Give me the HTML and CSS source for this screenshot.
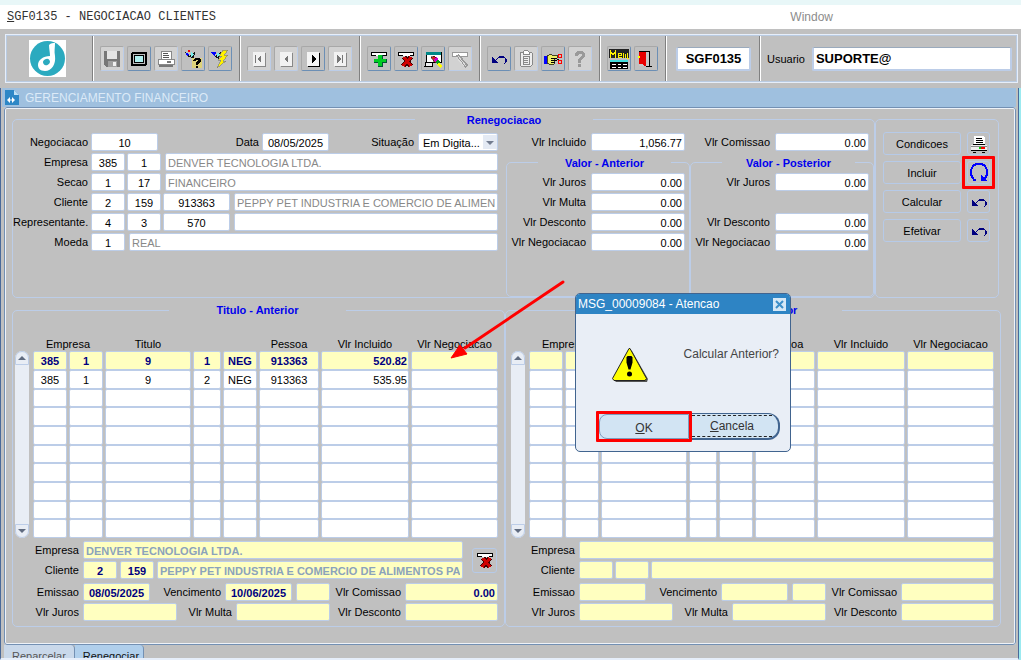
FILE: index.html
```html
<!DOCTYPE html>
<html lang="pt-BR">
<head>
    <meta charset="UTF-8">
    <title>SGF0135 - Negociacao Clientes</title>
    <link rel="stylesheet" href="styles.css">
</head>
<body>
    <!-- shared icons -->
    <svg class="sprite" aria-hidden="true">
        <symbol id="i-undo" viewBox="0 0 20 20">
            <path d="M7 11l3-3h5l2 2v3l-2 2" fill="none" stroke="#000080" stroke-width="1.200"/>
            <path d="M3 8v6h6z" fill="#000080"/>
        </symbol>
        <symbol id="i-remove" viewBox="0 0 20 20">
            <path d="M2 3h16v4H2z" fill="#fff"/>
            <path d="M2 3h16v1H2zM2 3h1v4H2zM17 3h1v4h-1zM2 6h5v1H2zM14 6h4v1h-4z" fill="#000"/>
            <path d="M8 8l7 9M15 8l-8 9" fill="none" stroke="#400" stroke-width="5"/>
            <path d="M8 8l7 9M15 8l-8 9" fill="none" stroke="#d00000" stroke-width="3"/>
        </symbol>
    </svg>

    <div class="top-strip"></div>
    <nav class="menubar">
        <a href="#" class="menu-main"><u>S</u>GF0135 - NEGOCIACAO CLIENTES</a>
        <a href="#" class="menu-window">Window</a>
    </nav>

    <header class="toolbar">
        <div class="tool-group logo">
            <svg width="37" height="37" viewBox="0 0 37 37">
                <rect width="37" height="37" fill="#fff"/>
                <circle cx="18.500" cy="18.500" r="17.500" fill="#2baabf"/>
                <path d="M20 5c2-2 4-2 6-2 0 5-1 8 0 13 1 8-3 15-10 15-5 0-7-3-7-6 0-5 5-9 12-9 0-4-1-7-1-11z" fill="#fff"/>
                <ellipse cx="17.500" cy="22" rx="3.500" ry="3" fill="#2baabf" transform="rotate(-35 17.500 22)"/>
            </svg>
        </div>
        <div class="tool-group">
            <button class="tool off" aria-label="Salvar" disabled>
                <svg viewBox="0 0 20 20"><path d="M2 2h16v16H4l-2-2z" fill="#777"/><path d="M5 2h10v8H5z" fill="#e4e4e4"/><path d="M6 12h9v6H6z" fill="#a0a0a0"/><path d="M11 13h3v4h-3z" fill="#f0f0f0"/></svg>
            </button>
            <button class="tool" aria-label="Tela">
                <svg viewBox="0 0 20 20"><rect x="3" y="4" width="14" height="12" rx="1" fill="#c0c0c0" stroke="#000" stroke-width="2"/><rect x="5.500" y="6.500" width="9" height="7" fill="#b0f0f0" stroke="#000"/></svg>
            </button>
            <button class="tool off" aria-label="Imprimir" disabled>
                <svg viewBox="0 0 20 20"><path d="M5 2h10v8H5z" fill="#fff" stroke="#888"/><path d="M7 4.500h5M7 6.500h6M7 8.500h6" stroke="#555"/><path d="M2 10h16v5H2z" fill="#fff" stroke="#888"/><path d="M3 17h14M11 12.500h4" stroke="#777" stroke-width="2"/></svg>
            </button>
            <button class="tool" aria-label="Entrar consulta">
                <svg viewBox="0 0 20 20"><path d="M2 3l4 4 6-4-1 6-6-1z" fill="#111"/><path d="M3 4l3 1-1 3-2-2z" fill="#00f"/><path d="M8 3l3 3-3 2z" fill="#7ee"/><path d="M5 1h2v2H5z" fill="red"/><path d="M9 9h10v10H9z" fill="#ddd27a"/><path d="M10 11l2-2h4l2 2v2l-3 2v1h-2v-3l2-1v-1h-2v1h-3zM13 17h2v2h-2z" fill="#000"/></svg>
            </button>
            <button class="tool" aria-label="Executar consulta">
                <svg viewBox="0 0 20 20"><path d="M1 3l4 4 6-4-2 7-4-2z" fill="#111"/><path d="M1 3h5l-1 4-2-1z" fill="#00f"/><path d="M7 4l3 1-3 3z" fill="#7ee"/><path d="M13 1h5l-4 5h4l-5 6h3l-9 7 4-8H8l4-4H9z" fill="#fff200" stroke="#777" stroke-width=".6"/></svg>
            </button>
        </div>
        <div class="tool-group">
            <button class="tool off" aria-label="Primeiro" disabled>
                <svg viewBox="0 0 20 20"><path d="M4 3h12v14H4z" fill="#f2f2f2"/><path d="M16 4v13H5" fill="none" stroke="#888"/><path d="M12 6v8l-4-4zM6 6h1v8H6z" fill="#777"/></svg>
            </button>
            <button class="tool off" aria-label="Anterior" disabled>
                <svg viewBox="0 0 20 20"><path d="M4 3h12v14H4z" fill="#f2f2f2"/><path d="M16 4v13H5" fill="none" stroke="#888"/><path d="M12 6v8l-4-4z" fill="#777"/></svg>
            </button>
            <button class="tool" aria-label="Proximo">
                <svg viewBox="0 0 20 20"><path d="M4 3h12v14H4z" fill="#f4f4f4"/><path d="M16 4v13H5" fill="none" stroke="#000"/><path d="M9 6v8l4-4z" fill="#000"/></svg>
            </button>
            <button class="tool off" aria-label="Ultimo" disabled>
                <svg viewBox="0 0 20 20"><path d="M4 3h12v14H4z" fill="#f2f2f2"/><path d="M16 4v13H5" fill="none" stroke="#888"/><path d="M7 6v8l4-4zM12 6h1v8h-1z" fill="#777"/></svg>
            </button>
        </div>
        <div class="tool-group">
            <button class="tool" aria-label="Inserir">
                <svg viewBox="0 0 20 20"><path d="M2 3h16v4H2z" fill="#fff"/><path d="M2 3h16v1H2zM2 3h1v4H2zM17 3h1v4h-1zM2 6h5v1H2zM14 6h4v1h-4z" fill="#000"/><path d="M9 6h5v4h4v4h-4v4H9v-4H5v-4h4z" fill="#053"/><path d="M9 6h4v4h4v3h-4v4H9v-4H5v-3h4z" fill="#0c2"/></svg>
            </button>
            <button class="tool" aria-label="Remover">
                <svg viewBox="0 0 20 20"><use href="#i-remove"/></svg>
            </button>
            <button class="tool" aria-label="Limpar tela">
                <svg viewBox="0 0 20 20"><path d="M3 3h15v10H3z" fill="#fff" stroke="#000"/><path d="M3 3h15v3H3z" fill="#088"/><path d="M3 13h6v4H2z" fill="#eee" stroke="#000"/><path d="M8 8l3-1 4 4-3 3z" fill="#d02020" stroke="#000" stroke-width=".5"/><path d="M10 11l3-3 2 2-3 3z" fill="#c0c"/><path d="M12 13l3-3 2 3-2 2z" fill="#092"/><path d="M14 15l2-2 3 4-2 2z" fill="#ff0"/></svg>
            </button>
            <button class="tool off" aria-label="Limpar registro" disabled>
                <svg viewBox="0 0 20 20"><path d="M2 3h15v4H2z" fill="#fff" stroke="#999"/><path d="M6 6l3-1 9 11-3 3z" fill="#999"/><path d="M8 7l8 10M6 8l8 9" stroke="#ddd"/></svg>
            </button>
        </div>
        <div class="tool-group">
            <button class="tool" aria-label="Desfazer">
                <svg viewBox="0 0 20 20"><use href="#i-undo"/></svg>
            </button>
            <button class="tool off" aria-label="Colar" disabled>
                <svg viewBox="0 0 20 20"><rect x="4" y="3" width="12" height="14" rx="1" fill="#eee" stroke="#888"/><path d="M7 5V3l2-2h2l2 2v2z" fill="#fff" stroke="#888"/><path d="M7 7h6v8H7zM8 9.500h4M8 11.500h4M8 13.500h4" fill="none" stroke="#888"/></svg>
            </button>
            <button class="tool" aria-label="Recortar">
                <svg viewBox="0 0 20 20"><path d="M1 7h3v8H1z" fill="#00f"/><path d="M4 7l3-2 2 1h5v3h-3v6l-3 1-4-2z" fill="#ee6" stroke="#000" stroke-width=".7"/><path d="M8 9.500h5M8 11.500h4M8 13.500h4" stroke="#000"/><path d="M12 9l4 2M12 12l4-2" stroke="#000"/><circle cx="17" cy="7" r="2" fill="none" stroke="red"/><circle cx="17" cy="13" r="2" fill="none" stroke="red"/></svg>
            </button>
            <button class="tool off" aria-label="Ajuda" disabled>
                <svg viewBox="0 0 20 20"><path d="M5 5l2-3h6l2 3v3l-4 3v3H8v-4l4-3V5H9l-1 2H5zM8 15h3v3H8z" fill="#999"/></svg>
            </button>
        </div>
        <div class="tool-group">
            <button class="tool" aria-label="Menu">
                <svg viewBox="0 0 20 20"><path d="M0 0h20v9H0z" fill="#222"/><path d="M1.500 9V2l2.500 4 2.500-4v7M13 6H9v2h4M9 6V4h3v2M14.500 9V4M16.500 5v4M18 4v5h2V4" fill="none" stroke="#fff200"/><path d="M1 11h18v9H1z" fill="#000"/><path d="M1 11h18v2H1z" fill="#4dd"/><path d="M3 15.500h4M9 15.500h3M14 15.500h4M3 18.500h4M9 18.500h3M14 18.500h4" stroke="#fff"/></svg>
            </button>
            <button class="tool" aria-label="Sair">
                <svg viewBox="0 0 20 20"><path d="M3 2h11v15H3z" fill="#c8c8c8"/><path d="M3 2h11v15h2v1h-6v-1h3V3H3z" fill="#000"/><path d="M3 3h7v14H8l-1-2H3z" fill="#e80000"/><path d="M2 7h2v2H2z" fill="#ff0"/></svg>
            </button>
        </div>
        <div class="tool-group code">
            <input type="text" class="field big center" aria-label="Programa" value="SGF0135">
        </div>
        <div class="tool-group user">
            <label for="usuario">Usuario</label>
            <input type="text" class="field big" id="usuario" value="SUPORTE@">
        </div>
    </header>

    <main class="window">
        <div class="window-title">
            <svg width="14" height="15" viewBox="0 0 14 15"><path d="M0 0h9l5 5v10H0z" fill="#2d87c6"/><path d="M9 0v5h5z" fill="#bfe0f5"/><path d="M2 10l3-3v6zM7 7v6l3-3zM5 9.500h2v1H5z" fill="#fff"/></svg>
            <h1>GERENCIAMENTO FINANCEIRO</h1>
        </div>

        <div class="window-body">
            <div class="upper">
                <fieldset class="group reneg">
                    <legend><span>Renegociacao</span></legend>
                    <div class="reneg-cols">
                        <div class="form">
                            <div class="row">
                                <label class="lbl" for="negociacao">Negociacao</label>
                                <input type="text" class="field code-m center" id="negociacao" value="10">
                                <label class="lbl-data" for="data">Data</label>
                                <input type="text" class="field code-m center" id="data" value="08/05/2025">
                                <label class="lbl-sit" for="situacao">Situação</label>
                                <div class="select-box">
                                    <select id="situacao"><option>Em Digita...</option></select>
                                </div>
                            </div>
                            <div class="row">
                                <label class="lbl" for="empresa">Empresa</label>
                                <input type="text" class="field code-s center" id="empresa" value="385">
                                <input type="text" class="field code-s center" aria-label="Filial" value="1">
                                <input type="text" class="field desc" aria-label="Nome da empresa" value="DENVER TECNOLOGIA LTDA.">
                            </div>
                            <div class="row">
                                <label class="lbl" for="secao">Secao</label>
                                <input type="text" class="field code-s center" id="secao" value="1">
                                <input type="text" class="field code-s center" aria-label="Codigo da secao" value="17">
                                <input type="text" class="field desc" aria-label="Nome da secao" value="FINANCEIRO">
                            </div>
                            <div class="row">
                                <label class="lbl" for="cliente">Cliente</label>
                                <input type="text" class="field code-s center" id="cliente" value="2">
                                <input type="text" class="field code-s center" aria-label="Grupo do cliente" value="159">
                                <input type="text" class="field code-m center" aria-label="Codigo do cliente" value="913363">
                                <input type="text" class="field desc" aria-label="Nome do cliente" value="PEPPY PET INDUSTRIA E COMERCIO DE ALIMENTOS PARA">
                            </div>
                            <div class="row">
                                <label class="lbl" for="representante">Representante.</label>
                                <input type="text" class="field code-s center" id="representante" value="4">
                                <input type="text" class="field code-s center" aria-label="Grupo do representante" value="3">
                                <input type="text" class="field code-m center" aria-label="Codigo do representante" value="570">
                                <input type="text" class="field desc" aria-label="Nome do representante">
                            </div>
                            <div class="row">
                                <label class="lbl" for="moeda">Moeda</label>
                                <input type="text" class="field code-s center" id="moeda" value="1">
                                <input type="text" class="field desc" aria-label="Nome da moeda" value="REAL">
                            </div>
                        </div>

                        <div class="values">
                            <div class="row">
                                <label for="incluido">Vlr Incluido</label>
                                <input type="text" class="field num" id="incluido" value="1,056.77">
                            </div>
                            <fieldset class="group">
                                <legend><span>Valor - Anterior</span></legend>
                                <div class="row"><label for="a-juros">Vlr Juros</label><input type="text" class="field num" id="a-juros" value="0.00"></div>
                                <div class="row"><label for="a-multa">Vlr Multa</label><input type="text" class="field num" id="a-multa" value="0.00"></div>
                                <div class="row"><label for="a-desc">Vlr Desconto</label><input type="text" class="field num" id="a-desc" value="0.00"></div>
                                <div class="row"><label for="a-neg">Vlr Negociacao</label><input type="text" class="field num" id="a-neg" value="0.00"></div>
                            </fieldset>
                        </div>

                        <div class="values">
                            <div class="row">
                                <label for="comissao">Vlr Comissao</label>
                                <input type="text" class="field num" id="comissao" value="0.00">
                            </div>
                            <fieldset class="group">
                                <legend><span>Valor - Posterior</span></legend>
                                <div class="row"><label for="p-juros">Vlr Juros</label><input type="text" class="field num" id="p-juros" value="0.00"></div>
                                <div class="row"></div>
                                <div class="row"><label for="p-desc">Vlr Desconto</label><input type="text" class="field num" id="p-desc" value="0.00"></div>
                                <div class="row"><label for="p-neg">Vlr Negociacao</label><input type="text" class="field num" id="p-neg" value="0.00"></div>
                            </fieldset>
                        </div>
                    </div>
                </fieldset>

                <div class="actions">
                    <button class="btn">Condicoes</button>
                    <button class="btn icon" aria-label="Imprimir condicoes">
                        <svg viewBox="0 0 20 20"><path d="M5 2h9l2 2v7H5z" fill="#fff"/><path d="M7 4.500h6M7 6.500h7M7 8.500h7M4 10.500h12" stroke="#000"/><path d="M2 11h16v5H2z" fill="#eee"/><path d="M2 12.500h16" stroke="#888"/><path d="M10 13h2v2h-2z" fill="#0c0"/><path d="M12 13h4v2h-4z" fill="red"/><path d="M2 16.500h16M4 18.500h3M13 18.500h3" stroke="#000"/></svg>
                    </button>
                    <button class="btn">Incluir</button>
                    <button class="btn icon marked" aria-label="Incluir titulos">
                        <svg viewBox="0 0 20 20"><path d="M7 17H5l-1-2-2-3V7l2-4 3-2h6l3 2 2 4v5l-2 3-2 2" fill="none" stroke="#00f" stroke-width="2"/><path d="M12 12v6h6z" fill="#00f"/></svg>
                    </button>
                    <button class="btn">Calcular</button>
                    <button class="btn icon" aria-label="Desfazer calculo"><svg viewBox="0 0 20 20"><use href="#i-undo"/></svg></button>
                    <button class="btn">Efetivar</button>
                    <button class="btn icon" aria-label="Desfazer efetivacao"><svg viewBox="0 0 20 20"><use href="#i-undo"/></svg></button>
                </div>
            </div>

            <div class="lower">
                <fieldset class="group titulos">
                    <legend><span>Titulo - Anterior</span></legend>
                    <div class="grid-area">
                        <div class="scroll"><button class="up" aria-label="Subir"></button><button class="down" aria-label="Descer"></button></div>
                        <table>
                            <colgroup><col class="c1"><col class="c1"><col class="c3"><col class="c4"><col class="c1"><col class="c6"><col class="c7"><col class="c8"></colgroup>
                            <thead>
                                <tr><th colspan="2">Empresa</th><th>Titulo</th><th></th><th></th><th>Pessoa</th><th>Vlr Incluido</th><th>Vlr Negociacao</th></tr>
                            </thead>
                            <tbody>
                                <tr class="current"><td>385</td><td>1</td><td>9</td><td>1</td><td>NEG</td><td>913363</td><td class="num">520.82</td><td></td></tr>
                                <tr><td>385</td><td>1</td><td>9</td><td>2</td><td>NEG</td><td>913363</td><td class="num">535.95</td><td></td></tr>
                                <tr><td></td><td></td><td></td><td></td><td></td><td></td><td></td><td></td></tr>
                                <tr><td></td><td></td><td></td><td></td><td></td><td></td><td></td><td></td></tr>
                                <tr><td></td><td></td><td></td><td></td><td></td><td></td><td></td><td></td></tr>
                                <tr><td></td><td></td><td></td><td></td><td></td><td></td><td></td><td></td></tr>
                                <tr><td></td><td></td><td></td><td></td><td></td><td></td><td></td><td></td></tr>
                                <tr><td></td><td></td><td></td><td></td><td></td><td></td><td></td><td></td></tr>
                                <tr><td></td><td></td><td></td><td></td><td></td><td></td><td></td><td></td></tr>
                                <tr><td></td><td></td><td></td><td></td><td></td><td></td><td></td><td></td></tr>
                            </tbody>
                        </table>
                    </div>
                    <div class="detail">
                        <div class="detail-top">
                            <div class="detail-main">
                                <div class="row"><label class="d1" for="ta-emp">Empresa</label><input type="text" class="field desc" id="ta-emp" value="DENVER TECNOLOGIA LTDA."></div>
                                <div class="row gap3"><label class="d1" for="ta-cli">Cliente</label><input type="text" class="field code-s center" id="ta-cli" value="2"><input type="text" class="field code-s center" aria-label="Grupo do cliente" value="159"><input type="text" class="field desc" aria-label="Nome do cliente" value="PEPPY PET INDUSTRIA E COMERCIO DE ALIMENTOS PARA"></div>
                            </div>
                            <button class="btn del" aria-label="Excluir titulo"><svg viewBox="0 0 20 20"><use href="#i-remove"/></svg></button>
                        </div>
                        <div class="row gap4">
                            <label class="d1" for="ta-emi">Emissao</label><input type="text" class="field code-m center" id="ta-emi" value="08/05/2025">
                            <label class="d2" for="ta-ven">Vencimento</label><input type="text" class="field code-m center" id="ta-ven" value="10/06/2025"><input type="text" class="field code-s" aria-label="Dias">
                            <label class="d3" for="ta-com">Vlr Comissao</label><input type="text" class="field num grow" id="ta-com" value="0.00">
                        </div>
                        <div class="row gap4">
                            <label class="d1" for="ta-jur">Vlr Juros</label><input type="text" class="field code-l num" id="ta-jur">
                            <label class="d4" for="ta-mul">Vlr Multa</label><input type="text" class="field code-l num" id="ta-mul">
                            <label class="d3" for="ta-des">Vlr Desconto</label><input type="text" class="field num grow" id="ta-des">
                        </div>
                    </div>
                </fieldset>

                <fieldset class="group titulos posterior">
                    <legend><span>Titulo - Posterior</span></legend>
                    <div class="grid-area">
                        <div class="scroll"><button class="up" aria-label="Subir"></button><button class="down" aria-label="Descer"></button></div>
                        <table>
                            <colgroup><col class="c1"><col class="c1"><col class="c3"><col class="c4"><col class="c1"><col class="c6"><col class="c7"><col class="c8"></colgroup>
                            <thead>
                                <tr><th colspan="2">Empresa</th><th>Titulo</th><th></th><th></th><th>Pessoa</th><th>Vlr Incluido</th><th>Vlr Negociacao</th></tr>
                            </thead>
                            <tbody>
                                <tr class="current"><td></td><td></td><td></td><td></td><td></td><td></td><td></td><td></td></tr>
                                <tr><td></td><td></td><td></td><td></td><td></td><td></td><td></td><td></td></tr>
                                <tr><td></td><td></td><td></td><td></td><td></td><td></td><td></td><td></td></tr>
                                <tr><td></td><td></td><td></td><td></td><td></td><td></td><td></td><td></td></tr>
                                <tr><td></td><td></td><td></td><td></td><td></td><td></td><td></td><td></td></tr>
                                <tr><td></td><td></td><td></td><td></td><td></td><td></td><td></td><td></td></tr>
                                <tr><td></td><td></td><td></td><td></td><td></td><td></td><td></td><td></td></tr>
                                <tr><td></td><td></td><td></td><td></td><td></td><td></td><td></td><td></td></tr>
                                <tr><td></td><td></td><td></td><td></td><td></td><td></td><td></td><td></td></tr>
                                <tr><td></td><td></td><td></td><td></td><td></td><td></td><td></td><td></td></tr>
                            </tbody>
                        </table>
                    </div>
                    <div class="detail">
                        <div class="detail-top">
                            <div class="detail-main">
                                <div class="row"><label class="d1" for="tp-emp">Empresa</label><input type="text" class="field desc" id="tp-emp"></div>
                                <div class="row"><label class="d1" for="tp-cli">Cliente</label><input type="text" class="field code-s center" id="tp-cli"><input type="text" class="field code-s center" aria-label="Grupo do cliente"><input type="text" class="field desc" aria-label="Nome do cliente"></div>
                            </div>
                        </div>
                        <div class="row gap4">
                            <label class="d1" for="tp-emi">Emissao</label><input type="text" class="field code-m center" id="tp-emi">
                            <label class="d2" for="tp-ven">Vencimento</label><input type="text" class="field code-m center" id="tp-ven"><input type="text" class="field code-s" aria-label="Dias">
                            <label class="d3" for="tp-com">Vlr Comissao</label><input type="text" class="field num grow" id="tp-com">
                        </div>
                        <div class="row gap4">
                            <label class="d1" for="tp-jur">Vlr Juros</label><input type="text" class="field code-l num" id="tp-jur">
                            <label class="d4" for="tp-mul">Vlr Multa</label><input type="text" class="field code-l num" id="tp-mul">
                            <label class="d3" for="tp-des">Vlr Desconto</label><input type="text" class="field num grow" id="tp-des">
                        </div>
                    </div>
                </fieldset>
            </div>

            <!-- arrow pointing at the selected row -->
            <svg class="arrow" width="120" height="84" viewBox="0 0 120 84" aria-hidden="true">
                <path d="M114 5L16 71" stroke="red" stroke-width="3" stroke-linecap="round"/>
                <path d="M2 81l9-13 7 9z" fill="red" stroke="red"/>
            </svg>

            <section class="dialog" role="dialog" aria-labelledby="dlg-title">
                <div class="dialog-title">
                    <h2 id="dlg-title">MSG_00009084 - Atencao</h2>
                    <button class="close" aria-label="Fechar"><svg width="13" height="13" viewBox="0 0 13 13"><path d="M3 3l7 7M10 3l-7 7" stroke="#3d8fc9" stroke-width="2"/></svg></button>
                </div>
                <div class="dialog-text">
                    <svg width="38" height="36" viewBox="0 0 38 36">
                        <path d="M18 3l3 1 16 28-1 3H5l-2-2z" fill="#555"/>
                        <path d="M18 1.500L1.500 31.500l1.500 2h31l1.500-2L19 1.500z" fill="#ff0" stroke="#222"/>
                        <path d="M15.500 10.500l1-1.500h4l1 1.500v5l-2 7h-2l-2-7z" fill="#000"/><circle cx="18.500" cy="27" r="2.500" fill="#000"/>
                    </svg>
                    <p>Calcular Anterior?</p>
                </div>
                <div class="dialog-buttons">
                    <button class="ok"><span><u>O</u>K</span></button>
                    <button class="cancel"><span><u>C</u>ancela</span></button>
                </div>
            </section>
        </div>

        <nav class="tabs">
            <a href="#">Reparcelar</a>
            <a href="#" class="active">Renegociar</a>
        </nav>
    </main>
</body>
</html>
```
FILE: styles.css
```css
* {
    box-sizing: border-box;
}

body {
    margin: 0;
    min-height: 100vh;
    display: flex;
    flex-direction: column;
    background: #c0c0c0;
    color: #000;
    font-family: "Liberation Sans", Arial, sans-serif;
    font-size: 11px;
    line-height: 14px;
}

button, input, select {
    font: inherit;
    color: inherit;
    margin: 0;
    padding: 0;
}

.sprite {
    position: absolute;
    width: 0;
    height: 0;
}

/* menu */
.top-strip {
    height: 5px;
    background: #e8f7f8;
}

.menubar {
    display: flex;
    align-items: center;
    height: 24px;
    padding: 0 188px 0 7px;
    justify-content: space-between;
    background: #fff;
    font-size: 12px;
}

.menubar a {
    color: #333;
    text-decoration: none;
}

.menubar .menu-main {
    font-family: "Liberation Mono", monospace;
}

.menubar .menu-window {
    color: #8c8c8c;
}

/* toolbar */
.toolbar {
    display: flex;
    height: 49px;
    margin: 5px 3px 5px 5px;
    border: 1px solid #e6eefa;
    outline: 1px solid #b9cbe2;
    outline-offset: -2px;
    padding: 1px 0;
}

.tool-group {
    display: flex;
    align-items: center;
    gap: 3px;
    padding: 0 7px 0 6px;
    border-left: 1px solid #fff;
    border-right: 1px solid #808080;
}

.logo {
    width: 87px;
    padding: 0 0 0 23px;
    border-left: 0;
}

.tool {
    width: 24px;
    height: 25px;
    background: #c0c0c0;
    border: 1px solid #a8a8a8;
    border-right-color: #6c8fb5;
    border-bottom-color: #6c8fb5;
    border-radius: 2px;
}

.tool svg {
    display: block;
    width: 20px;
    height: 20px;
    margin: auto;
    shape-rendering: crispEdges;
}

.tool.off {
    background: #d2d2d2;
    border-right-color: #bccde8;
    border-bottom-color: #bccde8;
}

.code {
    width: 94px;
    padding: 0 8px 0 9px;
}

.code .field {
    width: 100%;
}

.user {
    flex: 1;
    gap: 7px;
    padding: 0 5px 0 6px;
    border-right: 0;
}

.user .field {
    flex: 1;
}

/* fields */
.field {
    height: 18px;
    min-width: 0;
    padding: 1px 2px 0;
    background: #fff;
    border: 1px solid #bccde8;
    border-radius: 2px;
}

.field.big {
    height: 24px;
    padding-top: 0;
    border-width: 2px;
    border-top: 1px solid #9aaabd;
    font-size: 13px;
    font-weight: bold;
}

.center { text-align: center; }
.num { text-align: right; }
.code-s { width: 34px; }
.code-m { width: 67px; }
.code-l { width: 94px; }

.desc {
    flex: 1;
    color: #888;
}

.grow {
    flex: 1;
}

.row {
    display: flex;
    align-items: center;
    gap: 2px;
    height: 18px;
    margin-bottom: 2px;
}

.row label {
    flex: none;
    text-align: right;
    white-space: nowrap;
}

/* inner window */
.window {
    flex: 1;
    display: flex;
    flex-direction: column;
    margin-right: 2px;
    padding: 0 2px 0 3px;
    border-left: 1px solid #4a6a9a;
    border-right: 1px solid #4a6a9a;
    box-shadow: 2px 0 0 #9beaf0;
    border-bottom: 2px solid #e6eefa;
}

.window-title {
    display: flex;
    align-items: center;
    gap: 6px;
    height: 19px;
    margin-left: -2px;
    padding-left: 3px;
    background: #9fc0df;
}

.window-title h1 {
    margin: 0;
    font-size: 12px;
    font-weight: normal;
    color: #dceaf7;
}

.window-body {
    flex: 1;
    position: relative;
    border: 2px solid #eef2f8;
    border-radius: 3px;
    outline: 1px solid #7390b3;
    outline-offset: -1px;
    padding: 2px 13px 15px 6px;
}

.group {
    min-width: 0;
    margin: 0;
    padding: 0;
    border: 1px solid #bccde8;
    border-radius: 5px;
}

.group legend {
    padding: 2px 0 0;
    color: #0000ee;
    font-weight: bold;
    line-height: 14px;
}

.group legend span {
    display: block;
    text-align: center;
}

.upper {
    display: flex;
    margin-right: 2px;
}

.reneg {
    flex: 1;
}

.reneg > legend {
    width: 178px;
    margin-left: 402px;
}

.reneg-cols {
    display: flex;
    padding-top: 6px;
    min-height: 170px;
}

.form {
    flex: 1;
    min-width: 0;
    padding-right: 8px;
}

.form .lbl {
    width: 75px;
    margin-right: 1px;
}

.form .desc {
    margin-left: 2px;
}

.lbl-data {
    width: 99px;
    margin-right: 1px;
}

.lbl-sit {
    width: 83px;
    margin-right: 2px;
}

.select-box {
    position: relative;
    flex: 1;
}

.select-box select {
    display: block;
    width: 100%;
    height: 18px;
    padding: 2px 16px 0 4px;
    appearance: none;
    background: #fff;
    border: 1px solid #bccde8;
    border-radius: 2px;
}

.select-box::after {
    content: "";
    position: absolute;
    top: 8px;
    right: 4px;
    border: 4px solid transparent;
    border-top-color: #737d90;
    border-bottom: 0;
    pointer-events: none;
}

.select-box::before {
    content: "";
    position: absolute;
    top: 2px;
    right: 1px;
    width: 14px;
    height: 14px;
    background: #e4eaf4;
    pointer-events: none;
}

.values {
    display: flex;
    flex-direction: column;
    width: 184px;
}

.values .row {
    justify-content: flex-end;
    gap: 5px;
    padding-right: 4px;
}

.values .row .field {
    width: 94px;
}

.values > .row {
    padding-right: 5px;
    flex: none;
}

.values .group {
    flex: 1;
    margin-top: 1px;
}

.values legend {
    width: 133px;
    margin-left: 31px;
    margin-bottom: 3px;
}

.actions {
    display: grid;
    grid-template-columns: 78px 23px;
    grid-auto-rows: 23px;
    gap: 6px;
    width: 124px;
    margin-top: 8px;
    padding: 12px 7px;
    border: 1px solid #bccde8;
    border-radius: 5px;
}

.btn {
    background: #c0c0c0;
    border: 1px solid #b6cae8;
    border-radius: 3px;
}

.btn.icon {
    position: relative;
}

.btn svg {
    display: block;
    width: 20px;
    height: 20px;
    margin: auto;
    shape-rendering: crispEdges;
}

.marked::after {
    content: "";
    position: absolute;
    inset: -6px;
    border: 3px solid #f00;
    border-radius: 1px;
}

/* titles tables */
.lower {
    display: grid;
    grid-template-columns: 493fr 496fr;
    margin-top: 5px;
}

.titulos {
    padding: 0 6px 5px 2px;
}

.titulos.posterior {
    padding-left: 5px;
}

.titulos legend {
    width: 177px;
    margin-left: 154px;
    padding: 0;
}

.grid-area {
    display: flex;
    gap: 4px;
    padding-top: 19px;
}

.scroll {
    display: flex;
    flex-direction: column;
    justify-content: space-between;
    width: 14px;
    margin-top: 15px;
    background: #e8edf5;
    border-radius: 7px;
}

.scroll button {
    height: 14px;
    background: #e8edf5;
    border: 1px solid #bccde8;
}

.scroll .up { border-radius: 7px 7px 0 0; }
.scroll .down { border-radius: 0 0 7px 7px; }

.scroll button::before {
    content: "";
    display: block;
    width: 0;
    margin: auto;
    border: 4px solid transparent;
}

.scroll .up::before {
    border-top: 0;
    border-bottom-color: #5f6b80;
}

.scroll .down::before {
    border-bottom: 0;
    border-top-color: #5f6b80;
}

table {
    flex: 1;
    width: 100%;
    margin: 0 -2px;
    table-layout: fixed;
    border-collapse: separate;
    border-spacing: 2px 0;
}

.c1 { width: 34px; }
.c3 { width: 86px; }
.c4 { width: 28px; }
.c6 { width: 60px; }
.c7 { width: 88px; }
.c8 { width: 87px; }

th {
    height: 15px;
    padding: 0;
    font-weight: normal;
    white-space: nowrap;
}

td {
    height: 19px;
    padding: 0 1px;
    background: #fff;
    border: 1px solid #bccde8;
    border-radius: 2px;
    text-align: center;
}

tr:nth-child(3n) td {
    height: 18px;
}

td.num {
    text-align: right;
}

.current td {
    background: #ffffc0;
    color: #000080;
    font-weight: bold;
}

.detail {
    padding-top: 3px;
}

.detail-top {
    display: flex;
    align-items: center;
    gap: 9px;
    margin-bottom: 4px;
}

.detail-main {
    flex: 1;
}

.detail-main .row:last-child {
    margin-bottom: 0;
}

.detail .field {
    background: #ffffc0;
    color: #000080;
    font-weight: bold;
}

.detail .field.desc {
    color: #8ba3bb;
}

.row.gap3 { gap: 3px; }
.row.gap4 { gap: 4px; }

.detail .row:last-child {
    margin-bottom: 0;
}

.d1 { width: 64px; }
.detail-main .d1 { margin-right: 2px; }
.detail-main .gap3 .d1 { margin-right: 1px; }
.d2 { width: 67px; }
.d3 { width: 67px; }
.d4 { width: 51px; }

.del {
    width: 25px;
    height: 25px;
    margin-right: 1px;
}

/* overlays */
.arrow {
    position: absolute;
    left: 443px;
    top: 168px;
}

.dialog {
    position: absolute;
    left: 569px;
    top: 184px;
    width: 216px;
    background: #e9eef6;
    border: 1px solid #41648f;
    border-radius: 5px;
    color: #444;
    font-size: 12px;
}

.dialog-title {
    display: flex;
    align-items: center;
    justify-content: space-between;
    height: 20px;
    padding: 0 4px 0 2px;
    background: #2e84c4;
    border-radius: 4px 4px 0 0;
}

.dialog-title h2 {
    margin: 0;
    font-size: 12px;
    font-weight: normal;
    color: #fff;
}

.close {
    width: 13px;
    height: 13px;
    background: #d5e8f6;
    border: 0;
}

.close svg {
    display: block;
}

.dialog-text {
    display: flex;
    justify-content: space-between;
    padding: 33px 11px 0 35px;
}

.dialog-text p {
    margin: 0;
}

.dialog-buttons {
    display: flex;
    padding: 28px 10px 9px 20px;
}

.dialog-buttons button {
    height: 31px;
    background: #d2e4f3;
    color: #333;
}

.dialog-buttons .ok {
    width: 96px;
    border: 3px solid #f00;
    border-radius: 1px;
}

.ok span {
    display: block;
    height: 25px;
    line-height: 26px;
    border: 1px solid #7d9cbd;
    border-radius: 8px 0 0 8px;
}

.dialog-buttons .cancel {
    flex: 1;
    height: 27px;
    align-self: center;
    border: 1px solid #41648f;
    border-left: 0;
    border-bottom-width: 2px;
    border-right-width: 2px;
    border-radius: 0 12px 12px 0;
}

.cancel span {
    display: block;
    margin-right: 6px;
    line-height: 20px;
    border-top: 1px dashed #222;
    border-bottom: 1px dashed #222;
}

/* tabs */
.tabs {
    display: flex;
    height: 13px;
    overflow: hidden;
}

.tabs a {
    height: 20px;
    padding: 4px 8px 0;
    background: #c9d8ea;
    border-right: 1px solid #7390b3;
    border-radius: 0 4px 0 0;
    color: #555;
    text-decoration: none;
}

.tabs .active {
    background: #b0cfec;
    color: #111;
    padding-right: 4px;
}
```
